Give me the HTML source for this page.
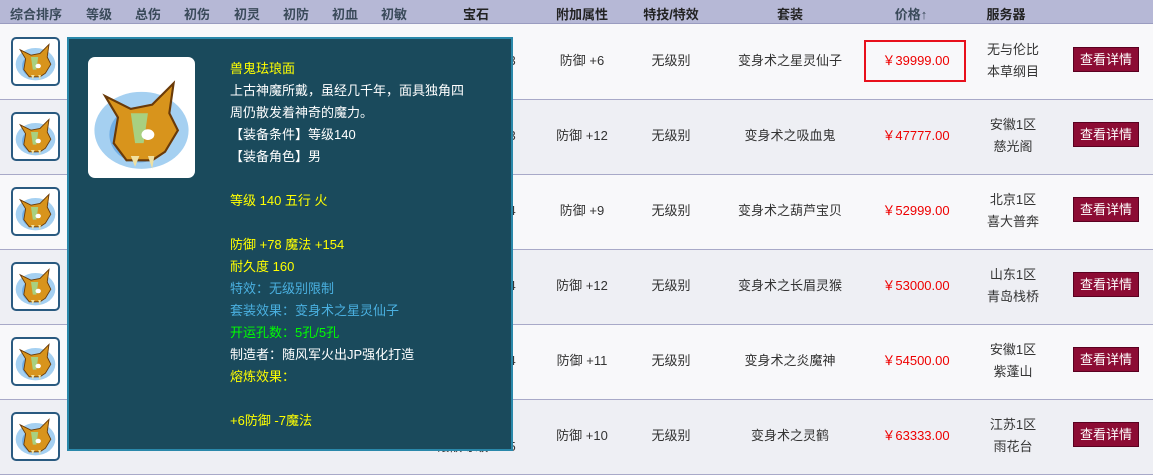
<!DOCTYPE html>
<html><head><meta charset="utf-8"><style>
*{margin:0;padding:0;box-sizing:border-box}
body{width:1153px;height:475px;overflow:hidden;background:#f8f8fa;font-family:"Liberation Sans","Noto Sans CJK SC",sans-serif;font-size:13px;color:#333;position:relative}
.hd{position:absolute;left:0;top:0;width:1153px;height:24px;background:#b6b8d6;border-bottom:1px solid #9a9cc0}
.hd span{position:absolute;top:4px;font-weight:bold;color:#3a4a5a;transform:translateX(-50%);white-space:nowrap}
.hd span.k{color:#222}
.row{position:absolute;left:0;width:1153px;height:75px;border-bottom:1px solid #a8a9c8}
.row.a{background:#f8f8fa}.row.b{background:#eeeff4}
.row span{position:absolute;transform:translateX(-50%);white-space:nowrap;text-align:center;line-height:22px}
.ic{position:absolute;left:11px;top:12px;width:49px;height:49px;border:2px solid #2a5a80;border-radius:5px;background:#fff;overflow:hidden}
.btn{position:absolute;left:1073px;top:22px;width:66px;height:25px;background:#8c0c34;border:1px solid #5a0020;color:#fff;text-align:center;line-height:23px}
.pr{color:#e00}
.tip{position:absolute;left:67px;top:37px;width:446px;height:414px;background:#1a4a5c;border:2px solid #2a88aa}
.imgb{position:absolute;left:19px;top:18px;width:107px;height:121px;background:#fff;border-radius:7px;overflow:hidden}
.tt{position:absolute;left:161px;top:19px;line-height:22px;color:#fff;font-size:13px;width:280px;white-space:nowrap}
.y{color:#ff0}.bl{color:#4ab0e0}.g{color:#0f0}.w{color:#fff}
</style></head><body>
<div class="hd">
<span style="left:36px">综合排序</span><span style="left:99px">等级</span><span style="left:148px">总伤</span><span style="left:197px">初伤</span><span style="left:247px">初灵</span><span style="left:296px">初防</span><span style="left:345px">初血</span><span style="left:394px">初敏</span>
<span class="k" style="left:476px">宝石</span><span class="k" style="left:582px">附加属性</span><span class="k" style="left:671px">特技/特效</span><span class="k" style="left:790px">套装</span><span style="left:911px">价格↑</span><span class="k" style="left:1006px">服务器</span>
</div>

<svg width="0" height="0" style="position:absolute"><defs>
<symbol id="m" viewBox="0 0 50 50">
<ellipse cx="25" cy="28" rx="22" ry="18" fill="#8ec4ee" opacity=".8"/>
<ellipse cx="24" cy="30" rx="14" ry="13" fill="#5aa0e0" opacity=".7"/>
<path d="M8 12 L20 18 L30 16 L40 6 L38 20 L42 28 L36 38 L30 42 L18 42 L12 34 L14 22 Z" fill="#d8941c" stroke="#6a3a08" stroke-width="1"/>
<path d="M20 20 L28 20 L26 34 L22 34 Z" fill="#a8d080"/>
<ellipse cx="28" cy="30" rx="3" ry="2.5" fill="#fff"/>
<path d="M20 40 L22 45 L24 40 M28 40 L30 46 L31 40" fill="#f0e0a0"/>
</symbol></defs></svg>

<div class="row a" style="top:25px"><div class="ic"><svg width="45" height="45"><use href="#m"/></svg></div>
<span style="left:476px;top:25px">镶嵌等级：13</span><span style="left:582px;top:25px">防御 +6</span><span style="left:671px;top:25px">无级别</span><span style="left:790px;top:25px">变身术之星灵仙子</span>
<div style="position:absolute;left:864px;top:15px;width:102px;height:42px;border:2px solid #e8101c"></div>
<span class="pr" style="left:916px;top:25px">￥39999.00</span><span style="left:1013px;top:14px">无与伦比<br>本草纲目</span><div class="btn">查看详情</div></div>

<div class="row b" style="top:100px"><div class="ic"><svg width="45" height="45"><use href="#m"/></svg></div>
<span style="left:476px;top:25px">镶嵌等级：13</span><span style="left:582px;top:25px">防御 +12</span><span style="left:671px;top:25px">无级别</span><span style="left:790px;top:25px">变身术之吸血鬼</span>
<span class="pr" style="left:916px;top:25px">￥47777.00</span><span style="left:1013px;top:14px">安徽1区<br>慈光阁</span><div class="btn">查看详情</div></div>

<div class="row a" style="top:175px"><div class="ic"><svg width="45" height="45"><use href="#m"/></svg></div>
<span style="left:476px;top:25px">镶嵌等级：14</span><span style="left:582px;top:25px">防御 +9</span><span style="left:671px;top:25px">无级别</span><span style="left:790px;top:25px">变身术之葫芦宝贝</span>
<span class="pr" style="left:916px;top:25px">￥52999.00</span><span style="left:1013px;top:14px">北京1区<br>喜大普奔</span><div class="btn">查看详情</div></div>

<div class="row b" style="top:250px"><div class="ic"><svg width="45" height="45"><use href="#m"/></svg></div>
<span style="left:476px;top:25px">镶嵌等级：14</span><span style="left:582px;top:25px">防御 +12</span><span style="left:671px;top:25px">无级别</span><span style="left:790px;top:25px">变身术之长眉灵猴</span>
<span class="pr" style="left:916px;top:25px">￥53000.00</span><span style="left:1013px;top:14px">山东1区<br>青岛栈桥</span><div class="btn">查看详情</div></div>

<div class="row a" style="top:325px"><div class="ic"><svg width="45" height="45"><use href="#m"/></svg></div>
<span style="left:476px;top:25px">镶嵌等级：14</span><span style="left:582px;top:25px">防御 +11</span><span style="left:671px;top:25px">无级别</span><span style="left:790px;top:25px">变身术之炎魔神</span>
<span class="pr" style="left:916px;top:25px">￥54500.00</span><span style="left:1013px;top:14px">安徽1区<br>紫蓬山</span><div class="btn">查看详情</div></div>

<div class="row b" style="top:400px"><div class="ic"><svg width="45" height="45"><use href="#m"/></svg></div>
<span style="left:476px;top:36px">镶嵌等级：15</span><span style="left:582px;top:25px">防御 +10</span><span style="left:671px;top:25px">无级别</span><span style="left:790px;top:25px">变身术之灵鹤</span>
<span class="pr" style="left:916px;top:25px">￥63333.00</span><span style="left:1013px;top:14px">江苏1区<br>雨花台</span><div class="btn">查看详情</div></div>

<div class="tip">
<div class="imgb"><svg width="107" height="121" viewBox="0 -3 50 56"><use href="#m"/></svg></div>
<div class="tt">
<div class="y">兽鬼珐琅面</div>
<div>上古神魔所戴，虽经几千年，面具独角四<br>周仍散发着神奇的魔力。</div>
<div>【装备条件】等级140</div>
<div>【装备角色】男</div>
<div>&nbsp;</div>
<div class="y">等级 140 五行 火</div>
<div>&nbsp;</div>
<div class="y">防御 +78 魔法 +154</div>
<div class="y">耐久度 160</div>
<div class="bl">特效：无级别限制</div>
<div class="bl">套装效果：变身术之星灵仙子</div>
<div class="g">开运孔数：5孔/5孔</div>
<div>制造者：随风军火出JP强化打造</div>
<div class="y">熔炼效果：</div>
<div>&nbsp;</div>
<div class="y">+6防御 -7魔法</div>
</div>
</div>
</body></html>
